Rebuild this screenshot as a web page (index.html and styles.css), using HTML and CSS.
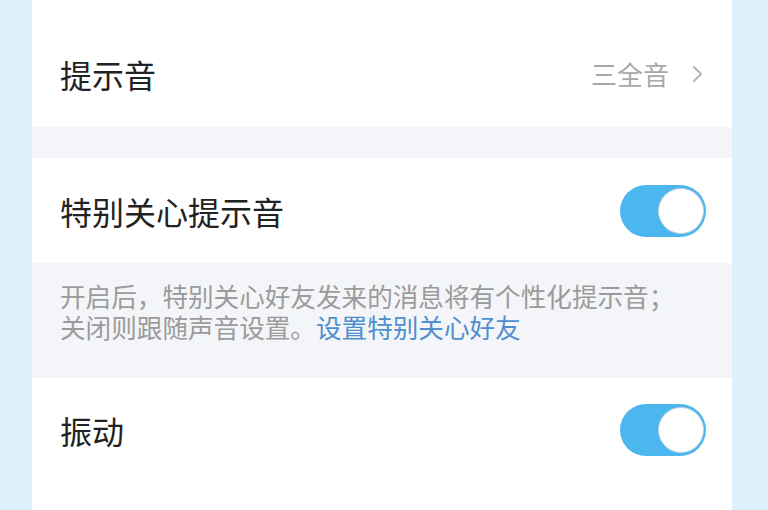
FILE: index.html
```html
<!DOCTYPE html>
<html lang="zh-CN">
<head>
<meta charset="utf-8">
<link rel="stylesheet" href="styles.css">
</head>
<body>
<div class="page">
  <div class="row row-first">
    <span class="label">提示音</span>
    <span class="value">三全音
      <svg class="chev" width="14" height="20" viewBox="0 0 14 20"><path d="M3 3 L10 10 L3 17" fill="none" stroke="#b5b5b5" stroke-width="2" stroke-linecap="round" stroke-linejoin="round"/></svg>
    </span>
  </div>
  <div class="gap"></div>
  <div class="row">
    <span class="label">特别关心提示音</span>
    <span class="toggle"><span class="knob"></span></span>
  </div>
  <div class="desc">
    <div class="line">开启后，特别关心好友发来的消息将有个性化提示音；</div>
    <div class="line">关闭则跟随声音设置。<span class="link">设置特别关心好友</span></div>
  </div>
  <div class="row row-last">
    <span class="label">振动</span>
    <span class="toggle"><span class="knob"></span></span>
  </div>
</div>
</body>
</html>
```
FILE: styles.css
```css
html, body {
  margin: 0;
  padding: 0;
  background: #dff0fd;
  height: 510px;
  overflow: hidden;
}
.page {
  width: 700px;
  margin-left: 32px;
  background: #ffffff;
  font-family: "Noto Sans CJK SC", "Noto Sans", sans-serif;
  min-height: 510px;
}
.row {
  display: flex;
  align-items: center;
  justify-content: space-between;
  height: 105px;
  padding: 0 26px 0 28px;
  background: #ffffff;
}
.row-first {
  height: 107px;
  padding-top: 20px;
}
.row-last {
  height: 104px;
}
.label {
  font-size: 32px;
  line-height: 40px;
  color: #222222;
}
.value {
  display: flex;
  align-items: center;
  font-size: 26px;
  line-height: 34px;
  color: #a8a8a8;
  padding-right: 1px;
}
.chev {
  margin-left: 22px;
}
.gap {
  height: 31px;
  background: #f3f5f8;
}
.toggle {
  position: relative;
  width: 86px;
  height: 52px;
  border-radius: 26px;
  background: #4cb6ee;
}
.knob {
  position: absolute;
  right: 2px;
  top: 3px;
  width: 44px;
  height: 44px;
  border-radius: 50%;
  background: #ffffff;
  border: 1px solid #c5d3dc;
}
.desc {
  background: #f3f5f8;
  height: 98px;
  padding: 17px 28px 0 28px;
  font-size: 25.6px;
  color: #9b9b9b;
}
.line {
  height: 31px;
  line-height: 31px;
  white-space: nowrap;
}
.link {
  color: #4f8fd0;
}
```
